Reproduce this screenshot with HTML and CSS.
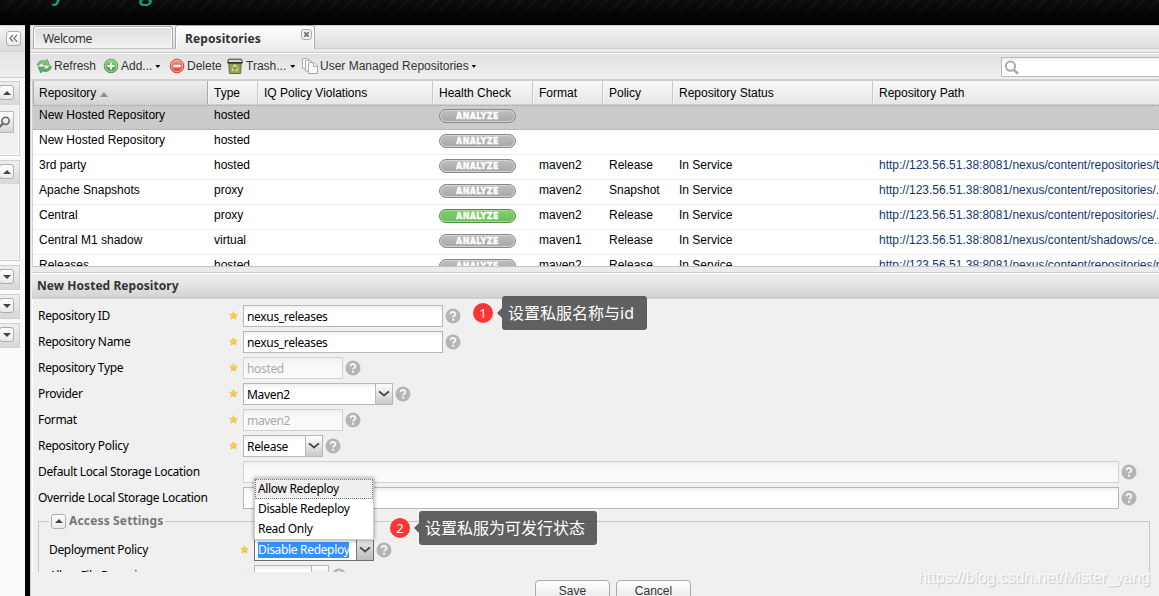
FILE: index.html
```html
<!DOCTYPE html>
<html lang="zh-CN">
<head>
    <meta charset="UTF-8">
    <meta name="viewport" content="width=device-width, initial-scale=1.0">
    <title>Repository Manager</title>
    <link rel="stylesheet" href="styles.css">
</head>
<body>
    <!-- shared icons -->
    <svg class="icon-defs" width="0" height="0">
        <defs>
            <linearGradient id="gold" x1="0" y1="0" x2="0" y2="1">
                <stop offset="0" stop-color="#f8e27c"/>
                <stop offset="1" stop-color="#f0b92c"/>
            </linearGradient>
            <linearGradient id="green" x1="0" y1="0" x2="0" y2="1">
                <stop offset="0" stop-color="#8fd08a"/>
                <stop offset="1" stop-color="#3f9a43"/>
            </linearGradient>
            <linearGradient id="red" x1="0" y1="0" x2="0" y2="1">
                <stop offset="0" stop-color="#f59a8c"/>
                <stop offset="1" stop-color="#e0392f"/>
            </linearGradient>
        </defs>
        <symbol id="star" viewBox="0 0 9 9">
            <path d="M4.5 .6 5.7 3 8.4 3.4 6.5 5.3 7 8.1 4.5 6.8 2 8.1 2.5 5.3 .6 3.4 3.3 3Z" fill="url(#gold)" stroke="#efbd3c" stroke-width=".6"/>
        </symbol>
        <symbol id="help" viewBox="0 0 16 16">
            <circle cx="8" cy="8" r="7.5" fill="#b5b5b5"/>
            <path d="M5.6 6.3C5.6 3.4 10.4 3.4 10.4 6.2 10.4 7.8 8.1 7.8 8.1 9.6" fill="none" stroke="#f3f3f3" stroke-width="2"/>
            <rect x="7" y="10.7" width="2.2" height="2" fill="#f3f3f3"/>
        </symbol>
    </svg>

    <header class="banner">
        <span class="logo">Repository Manager</span>
    </header>

    <div class="workspace">
        <aside class="sidebar">
            <div class="sidebar-head">
                <span class="tool collapse">
                    <svg width="9" height="9" viewBox="0 0 9 9"><path d="M4 .8.9 4.2 4 7.6M8 .8 4.9 4.2 8 7.6" fill="none" stroke="#666" stroke-width="1.1"/></svg>
                </span>
            </div>
            <div class="sidebar-bar"></div>
            <div class="side-panel search-panel">
                <div class="side-title"><span class="tool up"></span></div>
                <div class="side-search">
                    <svg width="14" height="14" viewBox="0 0 14 14"><circle cx="7.6" cy="4.8" r="3.6" fill="none" stroke="#666" stroke-width="1.6"/><path d="M5 7.5.5 12" stroke="#666" stroke-width="2"/></svg>
                </div>
            </div>
            <div class="side-panel views-panel">
                <div class="side-title"><span class="tool up"></span></div>
            </div>
            <div class="side-panel"><div class="side-title"><span class="tool down"></span></div></div>
            <div class="side-panel"><div class="side-title"><span class="tool down"></span></div></div>
            <div class="side-panel"><div class="side-title"><span class="tool down"></span></div></div>
        </aside>

        <main class="content">
            <div class="tabs">
                <div class="tab">Welcome</div>
                <div class="tab active">Repositories
                    <svg class="tab-close" width="11" height="11" viewBox="0 0 11 11"><rect x=".5" y=".5" width="10" height="10" rx="2.5" fill="#f4f4f4" stroke="#aaa"/><path d="M3.2 3.2 7.8 7.8M7.8 3.2 3.2 7.8" stroke="#777" stroke-width="1.9"/></svg>
                </div>
            </div>

            <div class="toolbar">
                <span class="tool-button refresh">
                    <svg width="16" height="16" viewBox="0 0 16 16">
                        <path d="M1 7.2C1.6 3.5 5.5 1.4 9.6 3.1L11.2 1.2 13.6 7.2 7 6.8 8.3 5.3C6 4.5 3.8 5.2 3 7.4Z" fill="#85be80" stroke="#4d9b4d" stroke-width=".6"/>
                        <path d="M15.5 8.4C15.1 12.4 10.5 14.6 6.5 12.9L4.7 15 2.2 9 9 9.3 7.7 10.8C10.2 11.6 12.5 10.8 13.3 8.4Z" fill="#63ad62" stroke="#3c893f" stroke-width=".6"/>
                    </svg>Refresh</span>
                <span class="tool-button add">
                    <svg width="16" height="16" viewBox="0 0 16 16"><circle cx="8" cy="8" r="6.8" fill="url(#green)" stroke="#4c9e4e"/><circle cx="8" cy="8" r="5.7" fill="none" stroke="#b7e0b2" stroke-width=".8"/><path d="M8 4.5V11.5M4.5 8H11.5" stroke="#fff" stroke-width="2"/></svg>Add...<i class="caret"></i></span>
                <span class="tool-button delete">
                    <svg width="16" height="16" viewBox="0 0 16 16"><circle cx="8" cy="8" r="6.8" fill="url(#red)" stroke="#d2443c"/><circle cx="8" cy="8" r="5.7" fill="none" stroke="#f8bcb4" stroke-width=".8"/><path d="M4.3 8H11.7" stroke="#fff" stroke-width="2.4"/></svg>Delete</span>
                <span class="tool-button trash">
                    <svg width="16" height="16" viewBox="0 0 16 16"><path d="M1.8 5H14.2L13.6 15.5H2.4Z" fill="#94a04c" stroke="#66702f"/><path d="M1.5 1.2H14.5L15.5 4.8H.5Z" fill="#d6d9cf" stroke="#3d4135"/><path d="M1 4.8H15" stroke="#2c3027" stroke-width="1.4"/><path d="M6 9.2 8 6.9 10 9.2M10.9 10.3 9.7 12.6H8.3M6.7 12.6 5.2 12 5.5 10.3" fill="none" stroke="#dce4a6" stroke-width="1.2"/></svg>Trash...<i class="caret"></i></span>
                <span class="tool-button managed">
                    <svg width="16" height="16" viewBox="0 0 16 16"><g fill="#fafafa" stroke="#aaa"><path d="M.5 .5H5.500L7.500 2.500V10.500H.5Z"/><path d="M3.500 2.500H8.500L11 5V13H3.500Z"/><path d="M6.500 4.500H12L15.500 8V15.500H6.500Z"/><path d="M11.500 4.500V8.500H15.500" fill="none"/></g></svg>User Managed Repositories<i class="caret"></i></span>
                <div class="search-box">
                    <svg width="16" height="16" viewBox="0 0 16 16"><circle cx="6.500" cy="6.200" r="4.600" fill="none" stroke="#aaa" stroke-width="2"/><path d="M10 9.800 14 13.800" stroke="#aaa" stroke-width="2.600"/></svg>
                </div>
            </div>

            <div class="grid">
                <div class="grid-row grid-head">
                    <span class="sorted">Repository<i class="sort-asc"></i></span><span>Type</span><span>IQ Policy Violations</span><span>Health Check</span><span>Format</span><span>Policy</span><span>Repository Status</span><span>Repository Path</span>
                </div>
                <div class="grid-row selected">
                    <span>New Hosted Repository</span><span>hosted</span><span></span><span><b class="analyze">ANALYZE</b></span><span></span><span></span><span></span><span></span>
                </div>
                <div class="grid-row">
                    <span>New Hosted Repository</span><span>hosted</span><span></span><span><b class="analyze">ANALYZE</b></span><span></span><span></span><span></span><span></span>
                </div>
                <div class="grid-row">
                    <span>3rd party</span><span>hosted</span><span></span><span><b class="analyze">ANALYZE</b></span><span>maven2</span><span>Release</span><span>In Service</span><span><a>http://123.56.51.38:8081/nexus/content/repositories/t...</a></span>
                </div>
                <div class="grid-row">
                    <span>Apache Snapshots</span><span>proxy</span><span></span><span><b class="analyze">ANALYZE</b></span><span>maven2</span><span>Snapshot</span><span>In Service</span><span><a>http://123.56.51.38:8081/nexus/content/repositories/...</a></span>
                </div>
                <div class="grid-row">
                    <span>Central</span><span>proxy</span><span></span><span><b class="analyze enabled">ANALYZE</b></span><span>maven2</span><span>Release</span><span>In Service</span><span><a>http://123.56.51.38:8081/nexus/content/repositories/...</a></span>
                </div>
                <div class="grid-row">
                    <span>Central M1 shadow</span><span>virtual</span><span></span><span><b class="analyze">ANALYZE</b></span><span>maven1</span><span>Release</span><span>In Service</span><span><a>http://123.56.51.38:8081/nexus/content/shadows/ce...</a></span>
                </div>
                <div class="grid-row">
                    <span>Releases</span><span>hosted</span><span></span><span><b class="analyze">ANALYZE</b></span><span>maven2</span><span>Release</span><span>In Service</span><span><a>http://123.56.51.38:8081/nexus/content/repositories/r...</a></span>
                </div>
            </div>

            <div class="splitter"></div>
            <h2 class="form-title">New Hosted Repository</h2>

            <div class="form">
                <div class="field">
                    <label>Repository ID</label>
                    <svg class="star"><use href="#star"/></svg>
                    <div class="input">nexus_releases</div>
                    <svg class="help"><use href="#help"/></svg>
                </div>
                <div class="field">
                    <label>Repository Name</label>
                    <svg class="star"><use href="#star"/></svg>
                    <div class="input">nexus_releases</div>
                    <svg class="help"><use href="#help"/></svg>
                </div>
                <div class="field">
                    <label>Repository Type</label>
                    <svg class="star"><use href="#star"/></svg>
                    <div class="input short disabled">hosted</div>
                    <svg class="help"><use href="#help"/></svg>
                </div>
                <div class="field">
                    <label>Provider</label>
                    <svg class="star"><use href="#star"/></svg>
                    <div class="input combo provider">Maven2<i class="trigger"></i></div>
                    <svg class="help"><use href="#help"/></svg>
                </div>
                <div class="field">
                    <label>Format</label>
                    <svg class="star"><use href="#star"/></svg>
                    <div class="input short disabled">maven2</div>
                    <svg class="help"><use href="#help"/></svg>
                </div>
                <div class="field">
                    <label>Repository Policy</label>
                    <svg class="star"><use href="#star"/></svg>
                    <div class="input combo policy">Release<i class="trigger"></i></div>
                    <svg class="help"><use href="#help"/></svg>
                </div>
                <div class="field">
                    <label>Default Local Storage Location</label>
                    <i class="star"></i>
                    <div class="input long disabled"></div>
                    <svg class="help"><use href="#help"/></svg>
                </div>
                <div class="field">
                    <label>Override Local Storage Location</label>
                    <i class="star"></i>
                    <div class="input long"></div>
                    <svg class="help"><use href="#help"/></svg>
                </div>
                <fieldset class="access">
                    <legend><span class="tool up"></span>Access Settings</legend>
                    <div class="field">
                        <label>Deployment Policy</label>
                        <svg class="star"><use href="#star"/></svg>
                        <div class="input combo deployment focused"><mark>Disable Redeploy</mark><i class="trigger"></i>
                            <ul class="options">
                                <li class="over">Allow Redeploy</li>
                                <li>Disable Redeploy</li>
                                <li>Read Only</li>
                            </ul>
                        </div>
                        <svg class="help"><use href="#help"/></svg>
                    </div>
                    <div class="field">
                        <label>Allow File Browsing</label>
                        <svg class="star"><use href="#star"/></svg>
                        <div class="input combo browsing">True<i class="trigger"></i></div>
                        <svg class="help"><use href="#help"/></svg>
                    </div>
                </fieldset>
            </div>

            <div class="actions">
                <button>Save</button>
                <button>Cancel</button>
            </div>
        </main>
    </div>

    <div class="note note-name"><b>1</b><span>设置私服名称与id</span></div>
    <div class="note note-deploy"><b>2</b><span>设置私服为可发行状态</span></div>
    <div class="watermark">https://blog.csdn.net/Mister_yang</div>
</body>
</html>
```

FILE: styles.css
```css
* {
    box-sizing: border-box;
}

body {
    position: relative;
    margin: 0;
    width: 1159px;
    height: 596px;
    overflow: hidden;
    background: #000;
    color: #000;
    font: 12px/14px "Liberation Sans", Arial, sans-serif;
}

i {
    font-style: normal;
}

.icon-defs {
    position: absolute;
}

/* banner */
.banner {
    height: 25px;
    overflow: hidden;
    background: linear-gradient(rgba(0,0,0,0) 0, #000 23px), repeating-linear-gradient(135deg, #0d0d0d 0, #0d0d0d 8px, #1c1c1c 9px, #0d0d0d 10px);
}

.logo {
    display: block;
    width: 178px;
    margin-top: -23px;
    color: #12a363;
    font: 600 24px/28px "Open Sans", sans-serif;
    letter-spacing: .5px;
    direction: rtl;
    white-space: nowrap;
}

.workspace {
    display: flex;
    height: 571px;
}

/* left navigation */
.sidebar {
    flex: none;
    width: 25px;
    margin-right: 5px;
    background: #f9f9f9;
    border-top: 1px solid #d0d0d0;
}

.sidebar-head {
    height: 26px;
    padding: 5px 0 0 6px;
    background: linear-gradient(#f3f3f3, #dadada);
    border-bottom: 1px solid #d0d0d0;
}

.sidebar-bar {
    height: 26px;
    margin-bottom: 3px;
    background: linear-gradient(#e4e4e4, #efefef);
    border-bottom: 1px solid #d0d0d0;
}

.tool {
    display: flex;
    align-items: center;
    justify-content: center;
    width: 15px;
    height: 15px;
    background: linear-gradient(#fff, #eaeaea);
    border: 1px solid #adadad;
    border-radius: 3px;
}

.tool.up::before,
.tool.down::before {
    content: "";
    border: 4px solid transparent;
    border-top-width: 0;
    border-bottom: 4px solid #444;
}

.tool.down::before {
    border-bottom-width: 0;
    border-top: 4px solid #444;
}

.side-panel {
    width: 20px;
    margin-bottom: 4px;
    border: 1px solid #d0d0d0;
    border-left: none;
    background: #f0f0f0;
    box-shadow: inset -1px -1px #fafafa;
}

.side-title {
    height: 23px;
    padding: 3px 0 0 0;
    background: linear-gradient(#efefef, #d8d8d8);
}

.side-title .tool {
    margin-left: -1px;
}

.search-panel {
    height: 75px;
}

.side-search {
    width: 14px;
    height: 22px;
    margin-top: 6px;
    padding-top: 4px;
    background: linear-gradient(#fff, #d5d5d5);
    border: 1px solid #b5b8c8;
    border-left: none;
}

.side-search svg {
    margin-left: -2px;
}

.views-panel {
    height: 101px;
}

/* tabs */
.content {
    display: flex;
    flex-direction: column;
    flex: 1;
    min-width: 0;
    background: #f0f0f0;
    border-left: 1px solid #d0d0d0;
}

.tabs {
    display: flex;
    align-items: flex-end;
    gap: 2px;
    flex: none;
    height: 28px;
    padding: 0 0 3px 2px;
    background: linear-gradient(#f3f3f3, #dadada);
    border-top: 1px solid #d0d0d0;
    border-bottom: 1px solid #c8c8c8;
    box-shadow: inset 0 -3px #ebebeb, inset 0 -4px #d0d0d0;
}

.tab {
    position: relative;
    width: 140px;
    height: 23px;
    padding: 4px 0 0 9px;
    background: linear-gradient(#ddd, #f2f2f2);
    border: 1px solid #a8a8a8;
    border-bottom-color: #c4c4c4;
    border-radius: 3px 3px 0 0;
    box-shadow: inset 1px 1px #fff, inset -1px 0 #fff;
    color: #333;
    font: 12px/15px "Noto Sans", sans-serif;
    letter-spacing: -.4px;
}

.tab.active {
    height: 24px;
    padding-top: 5px;
    background: linear-gradient(#fff, #ececec);
    border-bottom: none;
    font-weight: bold;
    letter-spacing: .1px;
}

.tab-close {
    position: absolute;
    top: 3px;
    right: 2px;
}

/* toolbar */
.toolbar {
    display: flex;
    align-items: center;
    flex: none;
    height: 28px;
    padding-left: 5px;
    background: linear-gradient(#e1e1e1, #f0f0f0);
    border-top: 1px solid #fff;
    border-bottom: 2px solid #d0d0d0;
    color: #333;
}

.tool-button {
    display: flex;
    align-items: center;
    flex: none;
    gap: 2px;
    height: 20px;
    margin-top: -2px;
    white-space: nowrap;
}

.tool-button svg {
    flex: none;
    margin-top: 1px;
}

.caret {
    width: 5px;
    height: 3px;
    margin: 2px 0 0 1px;
    background: #000;
    clip-path: polygon(0 0, 100% 0, 50% 100%);
}

.refresh { width: 67px; }
.add { width: 66px; }
.delete { width: 58px; }
.trash { width: 75px; gap: 3px; }
.managed { width: 174px; }

.search-box {
    flex: none;
    width: 180px;
    height: 20px;
    margin-left: 525px;
    padding: 2px;
    background: linear-gradient(#edf1ef, #fff 4px);
    border: 1px solid #b9b9b9;
}

/* repository grid */
.grid {
    flex: none;
    height: 186px;
    margin-left: 1px;
    overflow: hidden;
    background: #fff;
    border-left: 1px solid #d0d0d0;
    border-bottom: 1px solid #c4c4c4;
}

.grid-row {
    display: grid;
    grid-template-columns: 175px 50px 175px 100px 70px 70px 200px 300px;
    height: 25px;
    border-bottom: 1px solid #ededed;
    white-space: nowrap;
}

.grid-row > span {
    padding: 3px 0 0 6px;
    overflow: hidden;
}

.grid-row a {
    color: #15356e;
}

.grid-head {
    height: 24px;
    background: linear-gradient(#f9f9f9, #e6e6e6);
    border-bottom: 1px solid #d0d0d0;
}

.grid-head > span {
    padding-top: 5px;
    border-right: 1px solid #cacaca;
    box-shadow: inset 1px 0 #f5f5f5;
}

.grid-head .sorted {
    background: linear-gradient(#ededed, #d4d4d4);
    border-right-color: #aaa;
    box-shadow: inset 1px 0 #aaa;
}

.sort-asc {
    display: inline-block;
    margin-left: 4px;
    border: 4px solid transparent;
    border-top-width: 0;
    border-bottom: 5px solid #909090;
}

.grid-row.selected {
    background: #cbcbcb;
    border: dotted #a3a3a3;
    border-width: 1px 0 1px 0;
}

.grid-row.selected > span {
    padding-top: 2px;
}

.analyze {
    display: block;
    width: 77px;
    height: 14px;
    margin-top: 1px;
    background: linear-gradient(#c0c0c0, #a6a6a6);
    border: 1px solid #888;
    border-radius: 7px;
    box-shadow: inset 0 0 0 1px #d4d4d4;
    color: #fff;
    font: bold 8px/13px "DejaVu Sans", sans-serif;
    letter-spacing: .4px;
    text-align: center;
    -webkit-text-stroke: .3px #fff;
}

.analyze.enabled {
    background: linear-gradient(#86cf70, #68bd56);
    border-color: #4f8e43;
    box-shadow: inset 0 0 0 1px #a5dc94;
}

.splitter {
    flex: none;
    height: 5px;
    background: #ebebeb;
}

/* repository form */
.form-title {
    flex: none;
    height: 27px;
    margin: 0 0 0 1px;
    padding: 6px 0 0 5px;
    background: linear-gradient(#f1f1f1, #d4d4d4);
    border-top: 1px solid #d0d0d0;
    border-bottom: 2px solid #d0d0d0;
    box-shadow: inset 0 1px #fff;
    color: #333;
    font: bold 12px/14px "Noto Sans", sans-serif;
    letter-spacing: .05px;
}

.form {
    flex: none;
    height: 273px;
    margin-left: 1px;
    padding: 6px 0 0 5px;
    overflow: hidden;
    border-left: 1px solid #fff;
    font: 12px/16px "Noto Sans", sans-serif;
    letter-spacing: -.33px;
}

.field {
    display: flex;
    align-items: flex-start;
    height: 26px;
    white-space: nowrap;
}

.field label {
    width: 191px;
    padding-top: 3px;
}

.field .star {
    width: 9px;
    height: 9px;
    margin: 6px 5px 0 0;
}

.field .help {
    width: 16px;
    height: 16px;
    margin: 3px 0 0 2px;
}

.input {
    width: 200px;
    height: 22px;
    padding: 3px 3px 0;
    background: linear-gradient(#edf1f1, #fff 5px);
    border: 1px solid #b5b8b8;
}

.input.short { width: 100px; }
.input.long { width: 876px; }

.input.disabled {
    background: linear-gradient(#edf0ef, #f9f9f9 6px);
    border-color: #d0d2d2;
    color: #aaa;
}

.combo {
    position: relative;
    display: flex;
    justify-content: space-between;
    padding-right: 0;
}

.provider { width: 150px; }
.policy { width: 80px; }
.deployment { width: 120px; }
.browsing { width: 75px; }

.trigger {
    display: flex;
    justify-content: center;
    width: 17px;
    height: 20px;
    margin-top: -3px;
    padding: 4px 1px 0 0;
    background: linear-gradient(#fff, #c9c9c9);
    border-left: 1px solid #b5b8c8;
}

/* down chevron of the combo box */
.trigger::before {
    content: "";
    width: 6px;
    height: 6px;
    border: solid #444;
    border-width: 0 2px 2px 0;
    transform: scaleY(.8) rotate(45deg);
}

.input.focused {
    padding-top: 2px;
    border-color: #6e6e6e;
}

.focused .trigger {
    margin-top: -2px;
    background: linear-gradient(#e6e6e6, #bdbdbd);
    border-color: #777;
}

.input mark {
    height: 16px;
    background: #3390ff;
    color: #fff;
}

.options {
    position: absolute;
    left: -1px;
    bottom: 20px;
    width: 120px;
    margin: 0;
    padding: 0;
    list-style: none;
    background: #fff;
    border: 1px solid #ccc;
    box-shadow: 0 0 4px rgba(0,0,0,0.4);
}

.options li {
    height: 20px;
    padding: 2px 0 0 3px;
}

.options .over {
    padding: 1px 0 0 2px;
    background: #efefef;
    border: 1px dotted #777;
}

.access {
    width: 1112px;
    margin: 0;
    padding: 10px 10px 0;
    border: 1px solid #c8c8c8;
}

.access legend {
    display: flex;
    align-items: center;
    gap: 3px;
    height: 16px;
    padding: 0 2px;
    color: #777;
    font-weight: bold;
    letter-spacing: .15px;
}

.actions {
    display: flex;
    gap: 6px;
    padding: 8px 0 0 504px;
}

.actions button {
    width: 75px;
    height: 22px;
    padding: 0;
    background: linear-gradient(#fff, #e6e6e6);
    border: 1px solid #aaa;
    border-radius: 4px;
    color: #333;
    font: 12px "Liberation Sans", Arial, sans-serif;
}

/* numbered notes over the form */
.note {
    position: absolute;
    display: flex;
    align-items: center;
    gap: 9px;
    color: #fff;
}

.note-name { left: 473px; top: 296px; }
.note-deploy { left: 390px; top: 511px; }

.note b {
    width: 20px;
    height: 20px;
    border-radius: 50%;
    background: #ff3434;
    font: 13px/20px "Noto Sans", sans-serif;
    text-align: center;
}

.note span {
    position: relative;
    height: 34px;
    padding: 0 12px 0 6px;
    background: rgba(72,72,72,0.86);
    border-radius: 3px;
    font: 16px/34px "Noto Sans", "Noto Sans CJK SC", sans-serif;
}

.note-name span {
    width: 145px;
}

.note span::before {
    content: "";
    position: absolute;
    left: -5px;
    top: 12px;
    border: 5px solid transparent;
    border-right-color: rgba(72,72,72,0.86);
    border-left: none;
}

.watermark {
    position: absolute;
    right: 9px;
    bottom: 8px;
    color: rgba(255,255,255,0.85);
    font-size: 16px;
    line-height: 20px;
    letter-spacing: -.1px;
    text-shadow: 1px 1px 1px #c4c4c4;
}
```
